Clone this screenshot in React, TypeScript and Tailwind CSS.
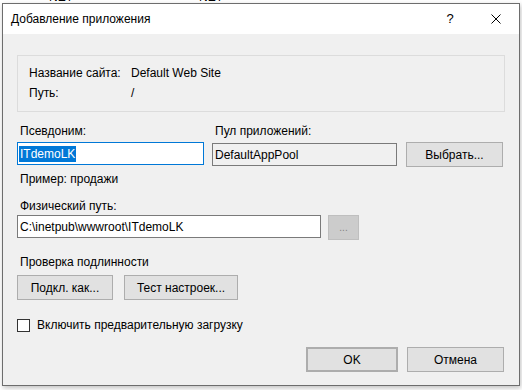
const font = { fontFamily: '"Liberation Sans", Arial, sans-serif' };

function Btn({ label, className = "" }: { label: string; className?: string }) {
  return (
    <div
      className={`flex h-[25px] items-center justify-center border border-[#adadad] bg-[#e1e1e1] text-[12px] text-black ${className}`}
    >
      {label}
    </div>
  );
}

function Field({ value, className = "" }: { value: string; className?: string }) {
  return (
    <div
      className={`flex h-[23px] items-center border border-[#7a7a7a] bg-[#f0f0f0] pl-[2px] text-[12px] text-black ${className}`}
    >
      {value}
    </div>
  );
}

export default function App() {
  return (
    <div className="h-[390px] w-[522px] overflow-hidden bg-white" style={font}>
      {/* window behind the dialog */}
      <div className="flex h-[3px] overflow-hidden text-[12px] leading-4 text-black">
        <span className="-mt-[11px] ml-[49px]">NET</span>
        <span className="-mt-[11px] ml-[126px]">NET</span>
      </div>

      <div className="ml-[2px] flex h-[383px] w-[518px] flex-col border border-[#6d6d6d] bg-[#f0f0f0] shadow-[1px_2px_5px_rgba(0,0,0,0.25)]">
        {/* title bar */}
        <div className="flex h-[30px] items-center bg-white">
          <span className="pl-[8px] text-[12px] text-black">Добавление приложения</span>
          <div className="ml-auto flex h-full">
            <div className="flex w-[46px] items-center justify-center text-[13px] text-black">?</div>
            <div className="flex w-[46px] items-center justify-center">
              <svg width="10" height="10" viewBox="0 0 10 10">
                <path d="M0.5 0.5 L9.5 9.5 M9.5 0.5 L0.5 9.5" stroke="#000" strokeWidth="1" fill="none" />
              </svg>
            </div>
          </div>
        </div>

        {/* body */}
        <div className="flex flex-1 flex-col pl-[14px] pr-[14px] text-[12px] leading-4 text-black">
          {/* site info box */}
          <div className="mt-[21px] flex h-[57px] w-[488px] flex-col gap-[4px] border border-[#dcdcdc] pl-[11px] pt-[9px]">
            <div className="flex">
              <span className="w-[102px]">Название сайта:</span>
              <span>Default Web Site</span>
            </div>
            <div className="flex">
              <span className="w-[102px]">Путь:</span>
              <span>/</span>
            </div>
          </div>

          {/* alias + pool */}
          <div className="mt-[11px] flex">
            <div className="flex w-[187px] flex-col">
              <span className="pl-[3px]">Псевдоним:</span>
              <div className="mt-[3px] flex h-[23px] items-center border border-[#0078d7] bg-white pl-[1px]">
                <span className="bg-[#0078d7] px-[1px] text-white">ITdemoLK</span>
              </div>
            </div>
            <div className="ml-[8px] flex flex-col">
              <span className="pl-[3px]">Пул приложений:</span>
              <div className="mt-[3px] flex items-center">
                <Field value="DefaultAppPool" className="w-[185px]" />
                <Btn label="Выбрать..." className="ml-[9px] w-[97px]" />
              </div>
            </div>
          </div>

          <span className="mt-[4px] pl-[3px]">Пример: продажи</span>

          <span className="mt-[11px] pl-[3px]">Физический путь:</span>
          <div className="mt-[1px] flex items-start">
            <Field value="C:\inetpub\wwwroot\ITdemoLK" className="w-[304px] bg-white" />
            <div className="ml-[7px] flex h-[25px] w-[31px] items-center justify-center border border-[#bfbfbf] bg-[#cccccc] text-[10px] text-[#838383]">
              ...
            </div>
          </div>

          <span className="mt-[14px] pl-[3px]">Проверка подлинности</span>
          <div className="mt-[5px] flex">
            <Btn label="Подкл. как..." className="w-[96px]" />
            <Btn label="Тест настроек..." className="ml-[11px] w-[114px]" />
          </div>

          <div className="mt-[17px] flex items-center">
            <div className="h-[13px] w-[13px] border border-[#333333] bg-white" />
            <span className="ml-[7px]">Включить предварительную загрузку</span>
          </div>

          <div className="mb-[13px] mr-[1px] mt-auto flex justify-end">
            <Btn label="OK" className="w-[92px] border-2 border-[#0078d7]" />
            <Btn label="Отмена" className="ml-[9px] w-[97px]" />
          </div>
        </div>
      </div>
    </div>
  );
}
